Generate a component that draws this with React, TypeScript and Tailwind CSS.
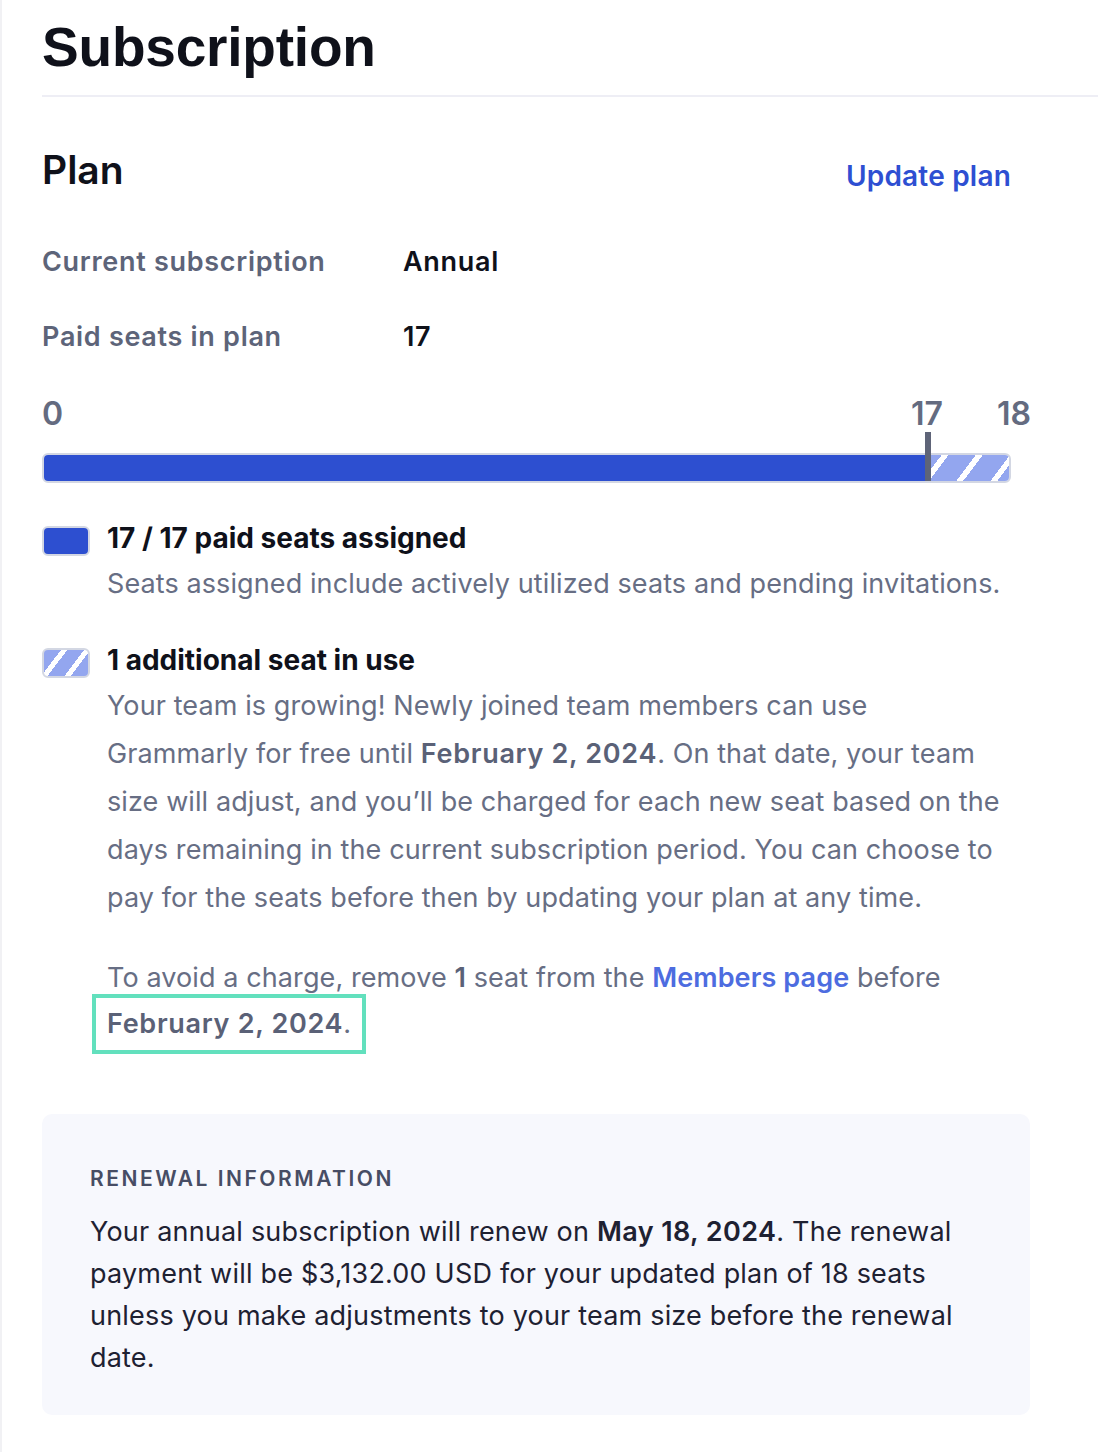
import React from 'react';

const barStripes =
  'bg-[repeating-linear-gradient(127deg,#93a6ef_0px,#93a6ef_8.5px,#ffffff_8.5px,#ffffff_14px,#93a6ef_14px,#93a6ef_27.3px)]';
const swatchStripes =
  'bg-[repeating-linear-gradient(127deg,#93a6ef_0px,#93a6ef_13.5px,#ffffff_13.5px,#ffffff_18.5px)]';

const Swatch = ({ striped }: { striped?: boolean }) => (
  <div
    className={`mt-[6px] h-[30px] w-[48px] shrink-0 rounded-[6px] border-2 border-[#d3d7e3] ${
      striped ? swatchStripes : 'bg-[#2d4fd0]'
    }`}
  />
);

const App = () => {
  return (
    <div className="min-h-[1452px] bg-white border-l-2 border-[#f1f1f4] font-['Inter',sans-serif] text-[#0f111a]">
      <div className="pl-[40px]">
        <h1 className="pt-[15px] font-['Liberation_Sans',Arial,sans-serif] text-[55px] font-bold leading-[64px] tracking-[-0.2px]">
          Subscription
        </h1>
        <div className="mt-[16px] h-[2px] bg-[#eeeef5]" />
      </div>

      <div className="pl-[40px] pr-[68px]">
        <div className="mt-[49px] flex w-[969px] items-start justify-between">
          <h2 className="text-[39px] font-semibold leading-[48px]">Plan</h2>
          <a className="pt-[6px] text-[28px] font-semibold leading-[48px] tracking-[0.2px] text-[#2e4fd2]">
            Update plan
          </a>
        </div>

        <dl className="mt-[42px] flex flex-col gap-[35px] text-[27px] font-semibold leading-[40px] tracking-[0.7px]">
          <div className="flex">
            <dt className="w-[361px] text-[#5d6479]">Current subscription</dt>
            <dd>Annual</dd>
          </div>
          <div className="flex">
            <dt className="w-[361px] text-[#5d6479]">Paid seats in plan</dt>
            <dd>17</dd>
          </div>
        </dl>

        {/* seat usage bar */}
        <div className="relative mt-[39px] w-[969px] pt-[57px]">
          <span className="absolute left-0 top-0 text-[32px] font-semibold leading-[36px] text-[#646b80]">0</span>
          <span className="absolute left-[869px] top-0 text-[32px] font-semibold leading-[36px] text-[#646b80]">17</span>
          <span className="absolute left-[955px] top-0 text-[32px] font-semibold leading-[36px] text-[#646b80]">18</span>
          <div className="relative flex h-[30px] overflow-hidden rounded-[6px] border-2 border-[#d3d7e3]">
            <div className="w-[881px] bg-[#2d4fd0]" />
            <div className="w-[6px] bg-[#5e6478]" />
            <div className={`flex-1 ${barStripes}`} />
          </div>
          <div className="absolute left-[883px] top-[36px] h-[23px] w-[6px] bg-[#5e6478]" />
        </div>

        {/* legend */}
        <div className="mt-[37px] flex gap-[17px]">
          <Swatch />
          <div>
            <div className="text-[28px] font-bold leading-[36px]">17 / 17 paid seats assigned</div>
            <p className="mt-[8px] text-[27px] leading-[40px] tracking-[0.1px] text-[#676e84]">
              Seats assigned include actively utilized seats and pending invitations.
            </p>
          </div>
        </div>

        <div className="mt-[38px] flex gap-[17px]">
          <Swatch striped />
          <div>
            <div className="text-[28px] font-bold leading-[36px]">1 additional seat in use</div>
            <p className="mt-[4px] whitespace-nowrap text-[27px] leading-[48px] tracking-[0.1px] text-[#676e84]">
              Your team is growing! Newly joined team members can use
              <br />
              Grammarly for free until{' '}
              <b className="font-semibold tracking-[0.7px] text-[#5a6177]">February 2, 2024</b>. On that date, your team
              <br />
              size will adjust, and you’ll be charged for each new seat based on the
              <br />
              days remaining in the current subscription period. You can choose to
              <br />
              pay for the seats before then by updating your plan at any time.
            </p>
            <p className="mt-[32px] whitespace-nowrap text-[27px] leading-[48px] tracking-[0.1px] text-[#676e84]">
              To avoid a charge, remove <b className="font-semibold text-[#5a6177]">1</b> seat from the{' '}
              <a className="font-semibold text-[#4d6ce0]">Members page</a> before
            </p>
            <div className="-ml-[15px] -mt-[8px]">
              <span className="inline-block border-4 border-[#62e0bd] px-[11px] py-[2px] text-[27px] leading-[48px] tracking-[0.1px] text-[#676e84]">
                <b className="font-semibold tracking-[0.7px] text-[#5a6177]">February 2, 2024</b>.
              </span>
            </div>
          </div>
        </div>

        {/* renewal */}
        <div className="mt-[60px] w-[988px] rounded-[10px] bg-[#f7f8fd] px-[48px] pb-[36px] pt-[51px]">
          <div className="text-[21px] font-semibold uppercase leading-[28px] tracking-[0.12em] text-[#474d64]">
            Renewal information
          </div>
          <p className="mt-[18px] whitespace-nowrap text-[27px] leading-[42px] tracking-[0.2px] text-[#1e2132]">
            Your annual subscription will renew on <b className="font-semibold tracking-[0.4px]">May 18, 2024</b>. The renewal
            <br />
            payment will be $3,132.00 USD for your updated plan of 18 seats
            <br />
            unless you make adjustments to your team size before the renewal
            <br />
            date.
          </p>
        </div>
      </div>
    </div>
  );
};

export default App;
